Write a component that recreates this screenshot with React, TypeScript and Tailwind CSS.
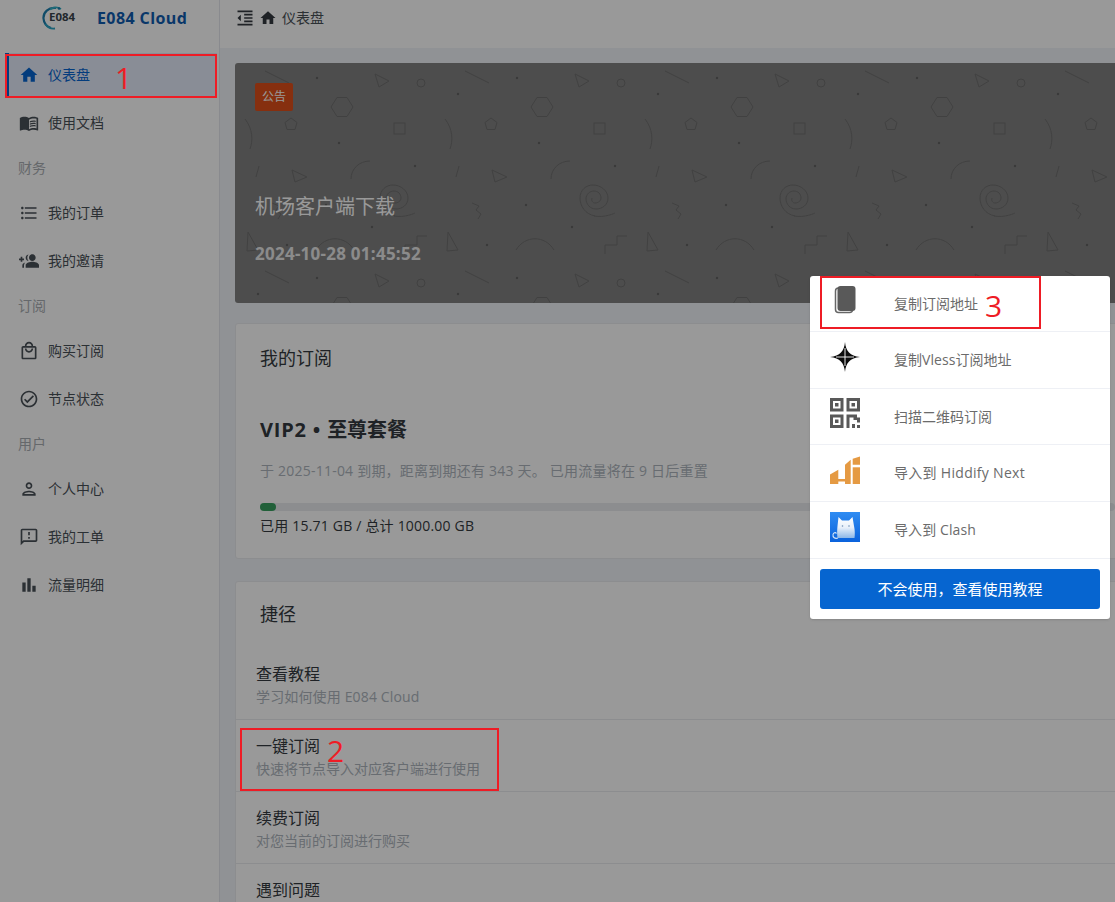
import React from 'react'
import {
  MdHome,
  MdMenuBook,
  MdFormatListBulleted,
  MdGroupAdd,
  MdOutlineLocalMall,
  MdOutlineCheckCircle,
  MdOutlinePerson,
  MdOutlineFeedback,
  MdBarChart,
  MdFormatIndentDecrease,
} from 'react-icons/md'

// the reference's group icon has its plus on the left
const GroupAddFlipped = (props: { size?: number }) => <MdGroupAdd {...props} className="-scale-x-100" />

const sideGroups = [
  { label: '', items: [{ icon: MdHome, text: '仪表盘', active: true }, { icon: MdMenuBook, text: '使用文档' }] },
  { label: '财务', items: [{ icon: MdFormatListBulleted, text: '我的订单' }, { icon: GroupAddFlipped, text: '我的邀请' }] },
  { label: '订阅', items: [{ icon: MdOutlineLocalMall, text: '购买订阅' }, { icon: MdOutlineCheckCircle, text: '节点状态' }] },
  { label: '用户', items: [{ icon: MdOutlinePerson, text: '个人中心' }, { icon: MdOutlineFeedback, text: '我的工单' }, { icon: MdBarChart, text: '流量明细' }] },
]

const shortcuts = [
  { title: '查看教程', desc: '学习如何使用 E084 Cloud', descClass: 'tracking-[0.15px]' },
  { title: '一键订阅', desc: '快速将节点导入对应客户端进行使用', descClass: '' },
  { title: '续费订阅', desc: '对您当前的订阅进行购买', descClass: '' },
  { title: '遇到问题', desc: '遇到问题可以通过工单与我们沟通', descClass: '' },
]

function Logo() {
  return (
    <svg width="34" height="24" viewBox="0 0 34 24" fill="none">
      <path d="M14 2C6.500 1 1 6.500 1.500 12.500c.3 4.500 3 8 7.500 9.500" stroke="#1c7fb0" strokeWidth="2.200" />
      <path d="M8 3.500c3.500-2.500 8-2.500 11-.5" stroke="#35b4c8" strokeWidth="1.800" />
      <path d="M3.500 18c2 3.500 5.500 5 9.500 4.500" stroke="#2aa4c4" strokeWidth="1.800" />
      <circle cx="17" cy="2.500" r="1.300" fill="#1c7fb0" />
      <text x="7" y="15" fontSize="10.500" fontWeight="700" fill="#3a434b" fontFamily="Open Sans" textLength="26" lengthAdjust="spacingAndGlyphs">E084</text>
    </svg>
  )
}

function BannerPattern() {
  return (
    <svg className="absolute inset-0 h-full w-full" xmlns="http://www.w3.org/2000/svg">
      <defs>
        <pattern id="shapes" width="200" height="200" patternUnits="userSpaceOnUse">
          <g fill="none" stroke="#6d6d6d" strokeWidth="1">
            <path d="M30 8L54 20" />
            <path d="M140 11L154 18L144 24Z" />
            <circle cx="186" cy="20" r="4" />
            <path d="M96 44L102 34.500L112 34.500L118 44L112 53.500L102 53.500Z" />
            <path d="M56 55L62 59.500L60 66.500L52 66.500L50 59.500Z" />
            <rect x="159" y="60" width="11" height="11" />
            <path d="M10 56C18 66 18 78 15 86" />
            <path d="M24 103L21 114" />
            <path d="M57 107L72 114L60 119Z" />
            <path d="M135 98C124 98 116 106 116 116" />
            <path d="M159 153C170 155 180 150 180 150M160 153C150 151 145 143 145 135C145 127 151 122 158 122C166 122 173 128 173 135C173 142 167 146 161 146C155 146 151 141 151 136C151 131 155 128 159 128C163 128 166 131 166 135C166 138 163 140 160 140C158 140 156 138 157 135" />
            <path d="M37 140L44 143L41 147L46 151L43 156" />
            <path d="M13 169L23 187L12 188Z" />
            <path d="M81 187C90 172 110 172 119 187" />
            <path d="M192 173L182 173L182 182L170 182L170 191" />
          </g>
          <g fill="#606060">
            <circle cx="82" cy="15" r="1.200" />
            <circle cx="23" cy="31" r="1.200" />
            <circle cx="104" cy="80" r="1.200" />
            <circle cx="180" cy="103" r="1.200" />
            <circle cx="91" cy="142" r="1.200" />
            <circle cx="137" cy="164" r="1.200" />
            <circle cx="52" cy="182" r="1.200" />
          </g>
        </pattern>
      </defs>
      <rect width="100%" height="100%" fill="url(#shapes)" />
    </svg>
  )
}

function CopyIcon() {
  return (
    <svg width="30" height="30" viewBox="0 0 30 30">
      <rect x="5.500" y="3" width="17" height="24.500" rx="3" fill="#fff" stroke="#666" strokeWidth="1.500" />
      <rect x="7.500" y="1" width="18" height="25" rx="3" fill="#595959" />
    </svg>
  )
}

function StarIcon() {
  return (
    <svg width="30" height="30" viewBox="0 0 30 30">
      <path d="M15 0C15.800 9 20 14 30 15C20 16 15.800 21 15 30C14.200 21 10 16 0 15C10 14 14.200 9 15 0Z" fill="#0b0b0b" />
      <path d="M15 6V24M6 15H24" stroke="#fff" strokeWidth="0.900" />
    </svg>
  )
}

function QrIcon() {
  return (
    <svg width="30" height="30" viewBox="0 0 30 30" fill="#595959">
      <path fillRule="evenodd" d="M0 0h13.500v13.500H0zM3 3v7.500h7.500V3z" />
      <rect x="5" y="5" width="3.500" height="3.500" />
      <path fillRule="evenodd" d="M16.500 0H30v13.500H16.500zM19.500 3v7.500H27V3z" />
      <rect x="21.500" y="5" width="3.500" height="3.500" />
      <path fillRule="evenodd" d="M0 16.500h13.500V30H0zM3 19.500V27h7.500v-7.500z" />
      <rect x="5" y="21.500" width="3.500" height="3.500" />
      <path d="M16.500 16.500H27v3h3v5h-3v-2.500h-3.500V19.500h-4V30h-3z" />
      <rect x="22" y="26" width="3" height="4" />
      <rect x="27" y="27" width="3" height="3" />
    </svg>
  )
}

function HiddifyIcon() {
  return (
    <svg width="30" height="30" viewBox="0 0 30 30" fill="#e59a43">
      <path d="M0 19.500L8.300 14.700V24H15V9.700L20.700 4.700V29H15V26.500H8.300V29H0Z" />
      <path d="M22.700 3.700L30 1.500V9.700H22.700Z" />
      <path d="M22.700 12.300H30V29H22.700Z" />
    </svg>
  )
}

function ClashIcon() {
  return (
    <svg width="30" height="30" viewBox="0 0 30 30">
      <defs>
        <linearGradient id="clashBg" x1="0" y1="0" x2="0" y2="1">
          <stop offset="0" stopColor="#2f8cf2" />
          <stop offset="1" stopColor="#0a62dc" />
        </linearGradient>
        <linearGradient id="clashCat" x1="0" y1="0" x2="0" y2="1">
          <stop offset="0" stopColor="#ffffff" />
          <stop offset="0.5" stopColor="#e8f0fa" />
          <stop offset="1" stopColor="#8db8e8" />
        </linearGradient>
      </defs>
      <rect width="30" height="30" fill="url(#clashBg)" />
      <path d="M8.500 5L12 8.500H19L22.500 5L24 14C25 18 25 23 24.500 26H7.500C7 23 7 18 7.500 14Z" fill="url(#clashCat)" />
      <path d="M8 26C5 27 2.500 25.500 3 22.500C3.400 20.500 5.500 20 6.500 21.500" fill="none" stroke="#d6e6f7" strokeWidth="1.100" />
      <circle cx="12.500" cy="14" r="0.800" fill="#6f8fb5" />
      <circle cx="19" cy="14" r="0.800" fill="#6f8fb5" />
    </svg>
  )
}

const popupRows = [
  { icon: CopyIcon, text: '复制订阅地址', rowClass: 'h-14', textClass: '' },
  { icon: StarIcon, text: '复制Vless订阅地址', rowClass: 'h-[57px]', textClass: 'tracking-[0.05px]' },
  { icon: QrIcon, text: '扫描二维码订阅', rowClass: 'h-14', textClass: '' },
  { icon: HiddifyIcon, text: '导入到 Hiddify Next', rowClass: 'h-[57px]', textClass: 'tracking-[0.3px]' },
  { icon: ClashIcon, text: '导入到 Clash', rowClass: 'h-[57px]', textClass: 'tracking-[0.1px]' },
]

export default function App() {
  return (
    <div className="relative flex h-[902px] w-[1115px] overflow-hidden bg-[#f0f3f8] font-['Open_Sans','Noto_Sans_CJK_SC',sans-serif] text-[#2c3034]">
      {/* Sidebar */}
      <aside className="w-[220px] shrink-0 border-r border-[#e4e7ed] bg-white">
        <div className="mb-[17px] flex h-9 items-center pl-[42px]">
          <Logo />
          <span className="ml-[21px] text-base font-bold tracking-[0.4px] text-[#0f5cb0]">E084 Cloud</span>
        </div>
        {sideGroups.map((group, i) => (
          <div key={i}>
            {group.label && (
              <div className="flex h-[42px] items-center pb-1 pl-[18px] text-sm text-[#a9adb2]">{group.label}</div>
            )}
            {group.items.map(({ icon: Icon, text, active }: any) => (
              <div
                key={text}
                className={`mb-1 ml-[5px] mr-[2px] flex h-11 items-center gap-[9px] border-l-4 pl-[10px] text-sm ${
                  active ? 'border-[#0665d0] bg-[#e5ecfb] text-[#0665d0]' : 'border-transparent text-[#495057]'
                }`}
              >
                <Icon size={20} />
                <span>{text}</span>
              </div>
            ))}
          </div>
        ))}
      </aside>

      {/* Main */}
      <main className="min-w-0 flex-1">
        <header className="flex h-12 items-center bg-white pb-3 pl-[15px] text-sm text-[#495057]">
          <MdFormatIndentDecrease size={20} className="text-[#343a40]" />
          <MdHome size={18} className="ml-[4px] text-[#343a40]" />
          <span className="ml-[5px]">仪表盘</span>
        </header>

        <div className="w-[920px] pl-[15px] pt-[15px]">
          {/* Notice banner */}
          <section className="relative h-60 overflow-hidden rounded-[3px] bg-[#808080] pl-5 text-white">
            <BannerPattern />
            <div className="relative">
              <span className="mt-5 inline-block h-7 rounded-[2px] bg-[#e04f1a] px-[7px] text-xs leading-7">公告</span>
              <div className="mt-[82px] text-[20px] leading-7">机场客户端下载</div>
              <div className="mt-[21px] text-[17px] font-bold leading-6 tracking-[0.25px] text-[#e8e8e8]">2024-10-28 01:45:52</div>
            </div>
          </section>

          {/* Subscription card */}
          <section className="mt-5 rounded-[3px] border border-[#e9ecef] bg-white">
            <div className="flex h-[69px] items-center px-6 text-[18px] text-[#343a40]">我的订阅</div>
            <div className="px-6 pb-[22px]">
              <div className="mt-[23px] text-[20px] font-bold leading-7 text-[#343a40]">
                <span className="tracking-[0.8px]">VIP2 • </span>至尊套餐
              </div>
              <div className="mt-[17px] text-sm leading-5 tracking-[0.22px] text-[#adb5bd]">
                于 2025-11-04 到期，距离到期还有 343 天。 已用流量将在 9 日后重置
              </div>
              <div className="mt-[22px] h-2 rounded-full bg-[#e9ecef]">
                <div className="h-2 w-4 rounded-full bg-[#38a060]" />
              </div>
              <div className="mt-[5px] text-sm leading-5 tracking-[0.2px] text-[#343a40]">已用 15.71 GB / 总计 1000.00 GB</div>
            </div>
          </section>

          {/* Shortcuts card */}
          <section className="mt-[22px] rounded-[3px] border border-[#e9ecef] bg-white">
            <div className="flex h-[66px] items-center px-6 pb-[2px] text-[18px] text-[#343a40]">捷径</div>
            {shortcuts.map((s) => (
              <div key={s.title} className="h-[72px] border-b border-[#e9ecef] pl-5 pt-[14px]">
                <div className="text-base leading-6 text-[#343a40]">{s.title}</div>
                <div className={`mt-px text-sm leading-5 text-[#adb5bd] ${s.descClass}`}>{s.desc}</div>
              </div>
            ))}
          </section>
        </div>
      </main>

      {/* Modal backdrop */}
      <div className="absolute inset-0 bg-black/40" />

      {/* Subscribe popup */}
      <div className="absolute left-[810px] top-[276px] w-[300px] rounded-[3px] bg-white pb-[10px] shadow-sm">
        {popupRows.map(({ icon: Icon, text, rowClass, textClass }) => (
          <div key={text} className={`flex items-center gap-[34px] border-b border-[#eef0f5] px-5 text-sm text-[#6b6b6b] ${rowClass}`}>
            <div className="mb-[7px]">
              <Icon />
            </div>
            <span className={textClass}>{text}</span>
          </div>
        ))}
        <div className="mx-[10px] mt-[10px] flex h-10 items-center justify-center rounded-[3px] bg-[#0665d0] text-[15px] text-white">
          不会使用，查看使用教程
        </div>
      </div>

      {/* Red annotations on the screenshot */}
      <div className="absolute left-[5px] top-[54px] h-[44px] w-[212px] border-2 border-[#ee1c25]" />
      <div className="absolute left-[240px] top-[728px] h-[63px] w-[259px] border-2 border-[#ee1c25]" />
      <div className="absolute left-[820px] top-[276px] h-[53px] w-[221px] border-2 border-[#ee1c25]" />
      <span className="absolute left-[115px] top-[60px] text-[30px] leading-9 text-[#ee1c25]">1</span>
      <span className="absolute left-[327px] top-[733px] text-[30px] leading-9 text-[#ee1c25]">2</span>
      <span className="absolute left-[985px] top-[288px] text-[30px] leading-9 text-[#ee1c25]">3</span>
    </div>
  )
}
